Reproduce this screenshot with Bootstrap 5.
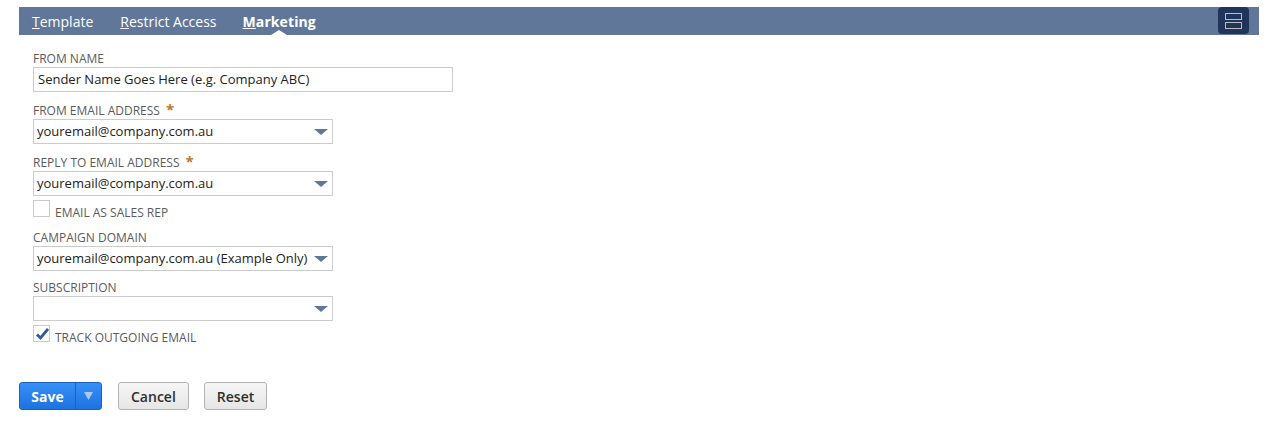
<!doctype html>
<html><head><meta charset="utf-8">
<link href="https://cdn.jsdelivr.net/npm/bootstrap@5.3.0/dist/css/bootstrap.min.css" rel="stylesheet">
<style>
html,body{background:#fff;font-family:"Open Sans","Liberation Sans",sans-serif;color:#222;overflow:hidden}
.page-wrap{padding:7px 19px 0}
.tabbar{height:28px;background:#607799;padding:0 10px 0 13px}
.tabs{gap:27px}
.tabitem{position:relative;color:#fff;font-size:14px;line-height:30px;height:28px;text-decoration:none}
.tabitem u{text-decoration-thickness:1px}
.tabitem.on{font-weight:700;margin-left:-1px;letter-spacing:.1px}
.tabitem.on::after{content:"";position:absolute;left:50%;bottom:0;margin-left:-8px;border:8px solid transparent;border-top:0;border-bottom:5px solid #fff}
.layout-btn{width:31px;height:27px;background:#213459;border-radius:4px}
.form-area{padding:17px 0 0 14px}
.lbl{font-size:12px;line-height:14px;color:#5b5b5b;margin:0 0 1px;display:block}
.req{color:#b9772f;font-size:15px;font-weight:700;line-height:10px;margin-left:3px}
.txtbox{width:420px;height:25px;border:1px solid #ccc;font-size:13px;line-height:23px;padding:0 4px;color:#222;margin-bottom:12px}
.selbox{width:300px;height:25px;border:1px solid #ccc;font-size:13px;line-height:23px;padding:0 3px;color:#222;white-space:nowrap}
.gap12{margin-bottom:12px}
.gap10{margin-bottom:10px}
.caretd{width:0;height:0;border:7px solid transparent;border-top:6px solid #607799;border-bottom:0;margin-right:1px}
.chkrow{margin-top:4px;gap:5px;height:17px}
.chkrow .lbl{padding-top:6px}
.gap14{margin-bottom:14px}
.chk{width:17px;height:17px;border:1px solid #ccc;background:#fff}
.actions{margin-top:40px}
.save-grp{height:28px;border-radius:3px;background:linear-gradient(#378ff8,#1e72de);border:1px solid #1a64bd;color:#fff;font-weight:700;font-size:14px}
.save-main{width:56px;text-align:center;line-height:28px;border-right:1px solid #1a64bd}
.save-arrow{width:25px}
.plainbtn{height:28px;font-size:14px;font-weight:600;color:#2f2f2f;background:linear-gradient(#f6f6f6,#e6e6e6);border:1px solid #b3b3b3;border-radius:3px;padding:0 12px;line-height:28px}
.back1{margin-left:-1px}
</style></head><body>
<div class="page-wrap">
<div class="tabbar d-flex justify-content-between">
<div class="d-flex tabs">
<a class="tabitem"><u>T</u>emplate</a><a class="tabitem"><u>R</u>estrict Access</a><a class="tabitem on"><u>M</u>arketing</a>
</div>
<div class="layout-btn d-flex align-items-center justify-content-center">
<svg width="17" height="16" viewBox="0 0 17 16"><rect x=".5" y=".5" width="16" height="6" fill="none" stroke="#bcbcbc"/><rect x=".5" y="9.500" width="16" height="6" fill="none" stroke="#bcbcbc"/></svg>
</div>
</div>
<div class="form-area">
<label class="lbl">FROM NAME</label>
<div class="txtbox">Sender Name Goes Here (e.g. Company ABC)</div>
<label class="lbl">FROM EMAIL ADDRESS <span class="req">*</span></label>
<div class="selbox d-flex justify-content-between align-items-center gap12">youremail@company.com.au<span class="caretd"></span></div>
<label class="lbl">REPLY TO EMAIL ADDRESS <span class="req">*</span></label>
<div class="selbox d-flex justify-content-between align-items-center">youremail@company.com.au<span class="caretd"></span></div>
<div class="d-flex chkrow gap14"><span class="chk"></span><span class="lbl m-0">EMAIL AS SALES REP</span></div>
<label class="lbl">CAMPAIGN DOMAIN</label>
<div class="selbox d-flex justify-content-between align-items-center gap10">youremail@company.com.au (Example Only)<span class="caretd"></span></div>
<label class="lbl">SUBSCRIPTION</label>
<div class="selbox d-flex justify-content-end align-items-center">&nbsp;<span class="caretd"></span></div>
<div class="d-flex chkrow"><span class="chk d-flex"><svg width="15" height="15" viewBox="0 0 15 15"><path d="M3 8.500l3.500 3.500L14 3" fill="none" stroke="#2c5c9c" stroke-width="2.800"/></svg></span><span class="lbl m-0">TRACK OUTGOING EMAIL</span></div>
</div>
<div class="actions d-flex gap-3">
<div class="save-grp d-flex"><div class="save-main">Save</div><div class="save-arrow d-flex align-items-center justify-content-center"><svg width="9" height="8"><path d="M0 0h9L4.500 8z" fill="#a9c8ee"/></svg></div></div>
<div class="plainbtn">Cancel</div><div class="plainbtn back1">Reset</div>
</div>
</div>
</body></html>
